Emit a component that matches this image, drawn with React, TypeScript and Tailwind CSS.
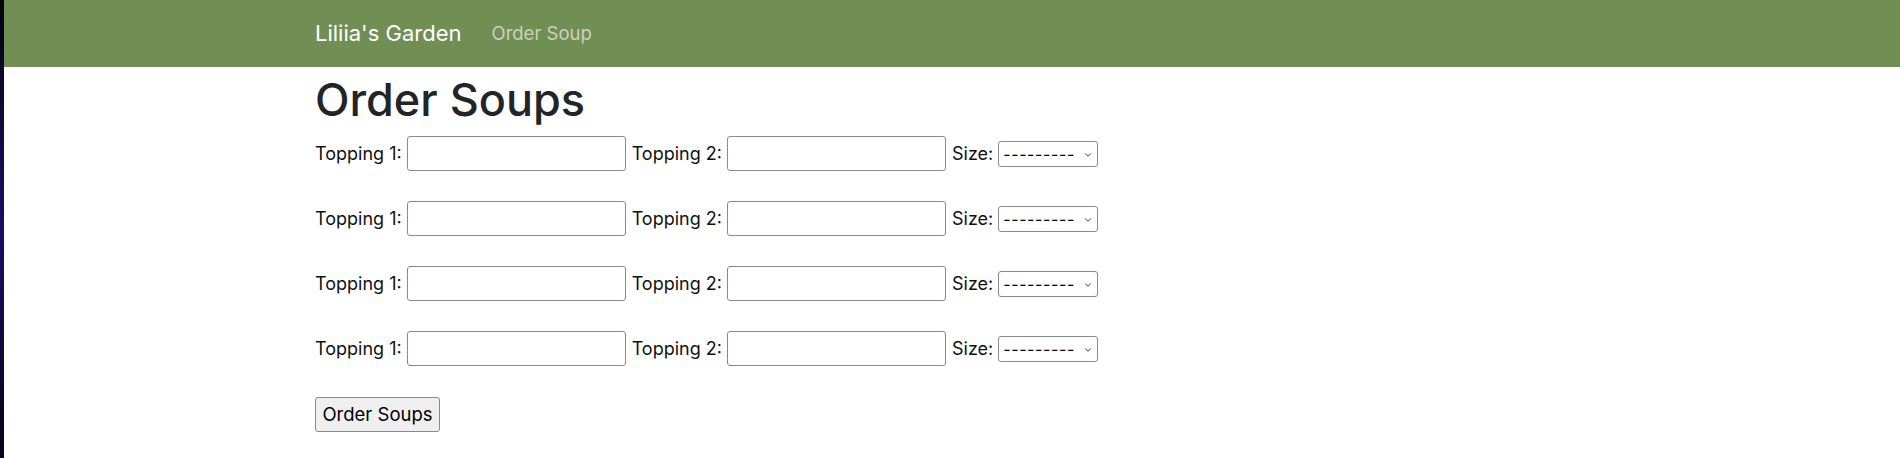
import { ChevronDown } from 'lucide-react';

const rows = [1, 2, 3, 4];

function SoupRow() {
  return (
    <div className="flex items-center h-[35px]">
      <label className="mr-[5px]">Topping 1:</label>
      <input
        type="text"
        className="w-[219px] h-[35px] border border-[#8a8a8a] rounded-[3px] bg-white mr-[6px]"
      />
      <label className="mr-[5px]">Topping 2:</label>
      <input
        type="text"
        className="w-[219px] h-[35px] border border-[#8a8a8a] rounded-[3px] bg-white mr-[6px]"
      />
      <label className="mr-[5px]">Size:</label>
      <div className="relative w-[100px] h-[26px] border border-[#8a8a8a] rounded-[3px] bg-white flex items-center pl-[4px] text-[16px] tracking-[0.6px] text-black">
        ---------
        <ChevronDown className="absolute right-[4px] top-[8px] w-[10px] h-[10px] text-[#333]" strokeWidth={2.2} />
      </div>
    </div>
  );
}

export default function App() {
  return (
    <div
      className="flex min-h-[458px] bg-white text-[#212529]"
      style={{ fontFamily: 'Inter, "Noto Sans", sans-serif' }}
    >
      <div className="w-[4px] shrink-0 bg-gradient-to-b from-[#07030f] via-[#1c0b66] to-[#08031a]" />
      <div className="flex-1">
        <nav className="h-[67px] bg-[#718f55] flex items-center pl-[311px]">
          <span className="text-white text-[22px] mr-[30px]">Liliia's Garden</span>
          <span className="text-[#c8d2be] text-[18.5px]">Order Soup</span>
        </nav>
        <main className="pl-[311px] pt-[3px] text-[18px]">
          <h1 className="text-[45px] font-medium leading-[60px] mb-[6px]">Order Soups</h1>
          <div className="flex flex-col gap-[30px] text-[#111]">
            {rows.map((r) => (
              <SoupRow key={r} />
            ))}
          </div>
          <button className="mt-[31px] w-[125px] h-[35px] bg-[#efefef] border border-[#8a8a8a] rounded-[3px] text-[18.5px] text-black">
            Order Soups
          </button>
        </main>
      </div>
    </div>
  );
}
